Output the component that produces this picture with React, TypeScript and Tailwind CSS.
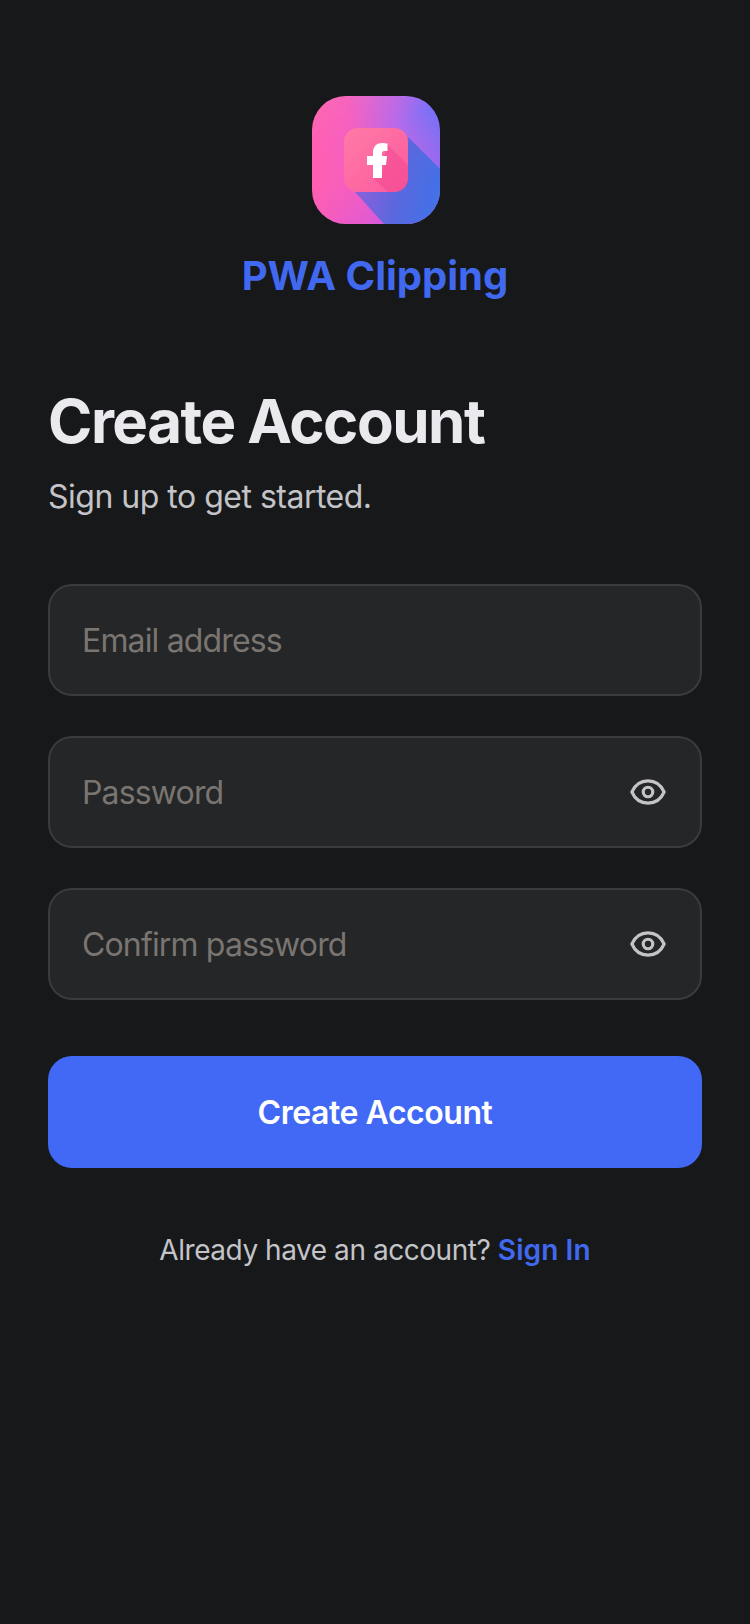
import React from "react";

function Logo() {
  return (
    <svg width="128" height="128" viewBox="0 0 128 128" className="ml-[2px] block">
      <defs>
        <linearGradient id="bg2" x1="0" y1="0.3" x2="1" y2="0.15">
          <stop offset="0" stopColor="#ff5fb0" />
          <stop offset="0.3" stopColor="#f45fc2" />
          <stop offset="0.65" stopColor="#b86aea" />
          <stop offset="1" stopColor="#6c72fb" />
        </linearGradient>
        <linearGradient id="bg3" x1="0" y1="0" x2="0.5" y2="1">
          <stop offset="0" stopColor="#ff7aa8" stopOpacity="0.4" />
          <stop offset="0.45" stopColor="#ff62c0" stopOpacity="0" />
          <stop offset="1" stopColor="#c850e6" stopOpacity="0.45" />
        </linearGradient>
        <linearGradient id="shadow" x1="0.1" y1="0.6" x2="0.9" y2="0.8">
          <stop offset="0" stopColor="#8560dc" />
          <stop offset="0.5" stopColor="#5a68de" />
          <stop offset="1" stopColor="#4570e6" />
        </linearGradient>
        <linearGradient id="tile" x1="0" y1="0" x2="1" y2="1">
          <stop offset="0" stopColor="#ff7aa6" />
          <stop offset="1" stopColor="#fb5a9e" />
        </linearGradient>
        <clipPath id="clip"><rect width="128" height="128" rx="34" /></clipPath>
      </defs>
      <g clipPath="url(#clip)">
        <rect width="128" height="128" fill="url(#bg2)" />
        <rect width="128" height="128" fill="url(#bg3)" />
        <path d="M96 41 L128 73 L128 128 L72 128 L43 96 Z" fill="url(#shadow)" />
      </g>
      <rect x="32" y="32" width="64" height="64" rx="14" fill="url(#tile)" />
      <path d="M75 48 L96 69 L96 82 A14 14 0 0 1 82 96 L76 96 L61 82 L70 80 L72 62 Z" fill="#f2458f" opacity="0.5" />
      <path d="M61 82 V69 H55 V60 H61 V56.500 C61 50 65 47 70.500 47 C72.500 47 74 47.200 75.500 47.500 V55 H72.500 C70.500 55 70 55.800 70 57.500 V60 H75 L74 69 H70 V82 Z" fill="#ffffff" />
    </svg>
  );
}

function Eye() {
  return (
    <svg width="38" height="38" viewBox="0 0 24 24" fill="none" stroke="#c4c4c6" strokeWidth="2" strokeLinecap="round" strokeLinejoin="round" className="shrink-0">
      <path d="M1.800 12C3.800 7.500 7.600 5 12 5s8.200 2.500 10.200 7c-2 4.500-5.800 7-10.200 7s-8.200-2.500-10.200-7Z" />
      <circle cx="12" cy="12" r="3" />
    </svg>
  );
}

function Field({ label, eye }: { label: string; eye?: boolean }) {
  return (
    <div className="flex h-[112px] items-center justify-between rounded-[24px] border-2 border-[#3a3b3e] bg-[#252628] pl-[32px] pr-[33px]">
      <span className="pt-[1px] text-[32px] tracking-[-0.85px] text-[#7a7570]">{label}</span>
      {eye ? <Eye /> : null}
    </div>
  );
}

export default function App() {
  return (
    <div className="min-h-[1624px] bg-[#17181a] px-[48px] pt-[96px] font-['Inter','Liberation_Sans',sans-serif]">
      <div className="flex flex-col items-center">
        <Logo />
        <div className="mt-[24px] text-[40px] font-bold leading-[56px] text-[#4169f0]">PWA Clipping</div>
      </div>
      <h1 className="mt-[81px] text-[60px] font-bold leading-[72px] tracking-[-1.5px] text-[#e9e9ee]">Create Account</h1>
      <p className="mt-[16px] text-[32px] leading-[48px] tracking-[-0.5px] text-[#c4c4c8]">Sign up to get started.</p>
      <div className="mt-[63px] flex flex-col gap-[40px]">
        <Field label="Email address" />
        <Field label="Password" eye />
        <Field label="Confirm password" eye />
      </div>
      <div className="mt-[56px] flex h-[112px] items-center justify-center rounded-[24px] bg-[#4169f5] pt-[2px] text-[32px] font-semibold tracking-[-0.45px] text-white">
        Create Account
      </div>
      <p className="mt-[60px] text-center text-[28px] leading-[44px] tracking-[-0.45px] text-[#c4c4c8]">
        Already have an account? <span className="font-semibold tracking-[0.1px] text-[#4169f0]">Sign In</span>
      </p>
    </div>
  );
}
